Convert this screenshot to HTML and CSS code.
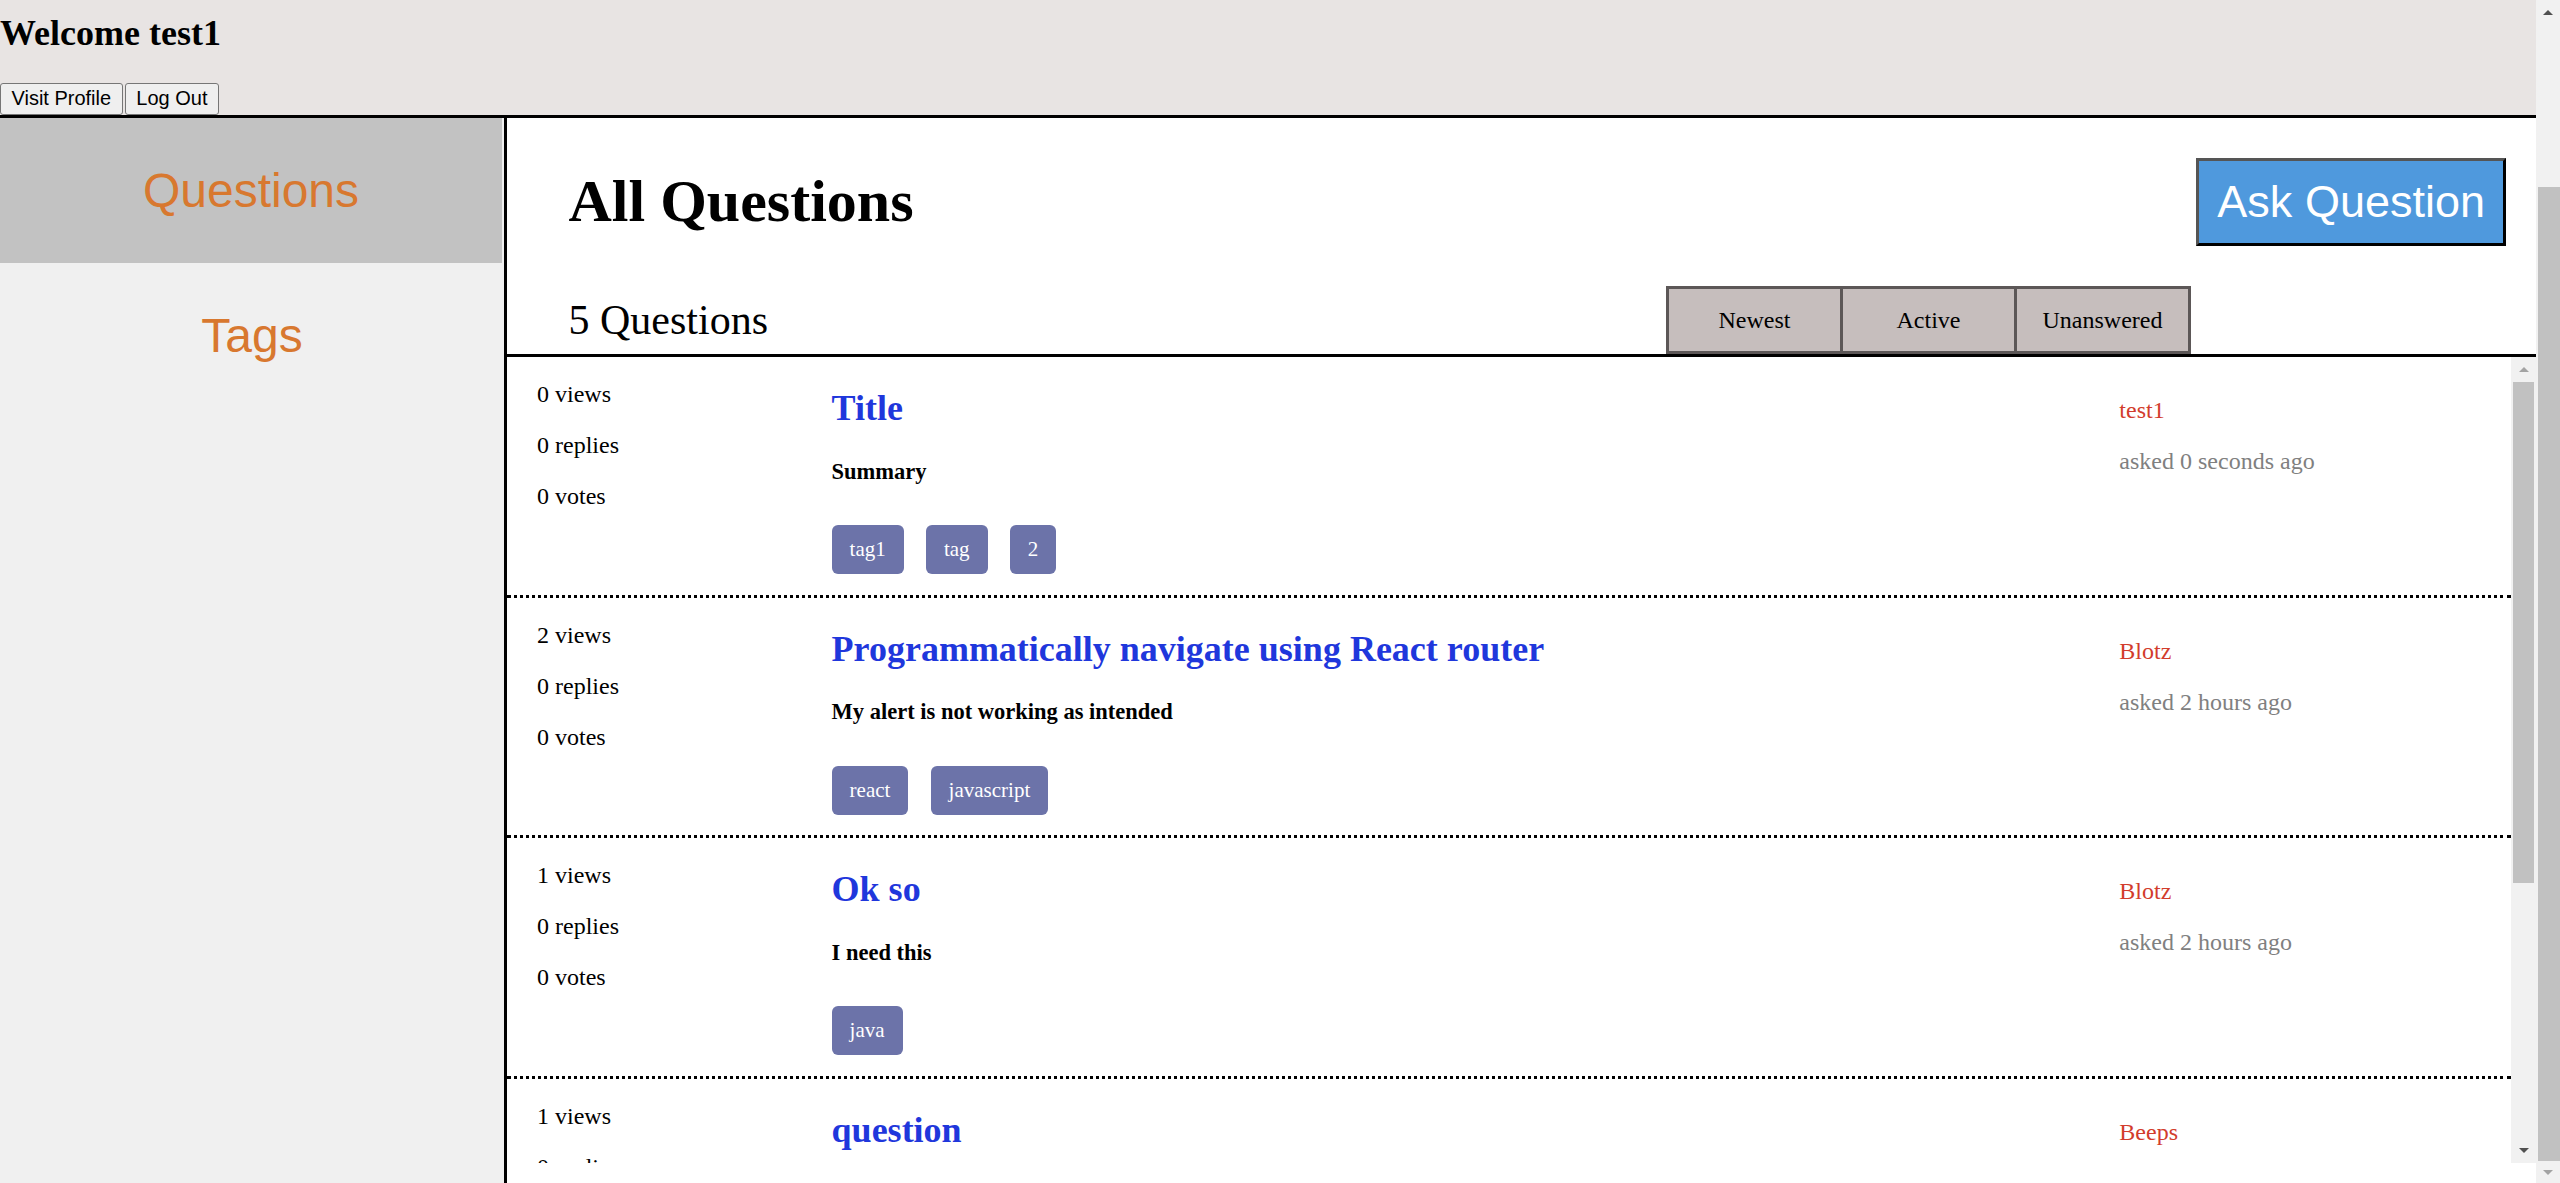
FILE: index.html
```html
<!DOCTYPE html>
<html lang="en">
<head>
<meta charset="utf-8">
<title>Fake Stack Overflow</title>
<link rel="stylesheet" href="styles.css">
</head>
<body>
<div class="page">
  <div class="app">
    <header class="topbar">
      <h2 class="welcome">Welcome test1</h2>
      <div class="actions"><button class="sys-btn" type="button">Visit Profile</button><button class="sys-btn" type="button">Log Out</button></div>
    </header>
    <div class="layout">
      <nav class="sidebar">
        <div class="nav-item active">Questions</div>
        <div class="nav-item">Tags</div>
      </nav>
      <main class="content">
        <div class="content-head">
          <div class="title-row">
            <h1 class="page-title">All Questions</h1>
            <button class="ask-btn" type="button">Ask Question</button>
          </div>
          <div class="count-row">
            <span class="q-count">5 Questions</span>
            <div class="sort-group">
              <button class="sort-btn" type="button">Newest</button>
              <button class="sort-btn" type="button">Active</button>
              <button class="sort-btn" type="button">Unanswered</button>
            </div>
          </div>
        </div>
        <div class="list-wrap">
          <div class="q-list">
            <div class="q-row">
              <div class="q-stats"><p>0 views</p><p>0 replies</p><p>0 votes</p></div>
              <div class="q-main">
                <h3 class="q-title">Title</h3>
                <p class="q-summary">Summary</p>
                <div class="q-tags"><span class="tag">tag1</span><span class="tag">tag</span><span class="tag">2</span></div>
              </div>
              <div class="q-author"><p class="author">test1</p><p class="asked">asked 0 seconds ago</p></div>
            </div>
            <div class="q-row">
              <div class="q-stats"><p>2 views</p><p>0 replies</p><p>0 votes</p></div>
              <div class="q-main">
                <h3 class="q-title">Programmatically navigate using React router</h3>
                <p class="q-summary">My alert is not working as intended</p>
                <div class="q-tags"><span class="tag">react</span><span class="tag">javascript</span></div>
              </div>
              <div class="q-author"><p class="author">Blotz</p><p class="asked">asked 2 hours ago</p></div>
            </div>
            <div class="q-row">
              <div class="q-stats"><p>1 views</p><p>0 replies</p><p>0 votes</p></div>
              <div class="q-main">
                <h3 class="q-title">Ok so</h3>
                <p class="q-summary">I need this</p>
                <div class="q-tags"><span class="tag">java</span></div>
              </div>
              <div class="q-author"><p class="author">Blotz</p><p class="asked">asked 2 hours ago</p></div>
            </div>
            <div class="q-row">
              <div class="q-stats"><p>1 views</p><p>0 replies</p><p>0 votes</p></div>
              <div class="q-main">
                <h3 class="q-title">question</h3>
                <p class="q-summary">help</p>
                <div class="q-tags"><span class="tag">java</span></div>
              </div>
              <div class="q-author"><p class="author">Beeps</p><p class="asked">asked 3 hours ago</p></div>
            </div>
            <div class="q-row">
              <div class="q-stats"><p>0 views</p><p>0 replies</p><p>0 votes</p></div>
              <div class="q-main">
                <h3 class="q-title">android studio save string shared preference</h3>
                <p class="q-summary">Storing a string</p>
                <div class="q-tags"><span class="tag">android</span></div>
              </div>
              <div class="q-author"><p class="author">Beeps</p><p class="asked">asked 3 hours ago</p></div>
            </div>
          </div>
          <div class="inner-scroll">
            <div class="sb-btn"><span class="tri-up light"></span></div>
            <div class="inner-thumb"></div>
            <div class="sb-fill"></div>
            <div class="sb-btn"><span class="tri-down dark"></span></div>
          </div>
        </div>
      </main>
    </div>
  </div>
  <div class="page-scroll">
    <div class="sb-btn"><span class="tri-up dark"></span></div>
    <div class="page-gap"></div>
    <div class="page-thumb"></div>
    <div class="sb-btn short"><span class="tri-down light"></span></div>
  </div>
</div>
</body>
</html>
```

FILE: styles.css
```css
html {
  zoom: 1.5;
}

body {
  margin: 0;
  background: #ffffff;
  font-family: "Liberation Serif", "Times New Roman", serif;
  font-size: 16px;
  color: #000000;
}

.page {
  display: flex;
  height: 788.67px;
  overflow: hidden;
}

.app {
  flex: 1;
  min-width: 0;
  display: flex;
  flex-direction: column;
}

/* ---------- top bar ---------- */
.topbar {
  background: #e8e4e3;
  border-bottom: 2px solid #000000;
}

.welcome {
  margin: 8px 0 19.4px 0;
  font-size: 24px;
  font-weight: bold;
  line-height: normal;
}

.actions {
  display: flex;
  height: 21px;
}

.sys-btn {
  font-family: "Liberation Sans", Arial, sans-serif;
  font-size: 13.333px;
  line-height: normal;
  padding: 1px 7px;
  margin: 0;
  border: 1px solid #767676;
  border-radius: 2px;
  background: #efefef;
  color: #000000;
  height: 21px;
}

.sys-btn + .sys-btn {
  margin-left: 1.5px;
}

/* ---------- layout ---------- */
.layout {
  flex: 1;
  min-height: 0;
  display: flex;
}

.sidebar {
  width: 338px;
  box-sizing: border-box;
  border-right: 2px solid #000000;
  background: #f0f0f0;
  flex: 0 0 auto;
}

.nav-item {
  padding: 30px 0;
  text-align: center;
  font-family: "Liberation Sans", Arial, sans-serif;
  font-size: 32px;
  line-height: normal;
  color: #d8782f;
}

.nav-item.active {
  background: #c2c2c2;
  margin-right: 1.33px;
}

.content {
  flex: 1;
  min-width: 0;
  display: flex;
  flex-direction: column;
  background: #ffffff;
}

/* ---------- content head ---------- */
.title-row {
  display: flex;
  justify-content: space-between;
  align-items: center;
  padding: 0 20px 0 41px;
}

.page-title {
  margin: 33.2px 0;
  font-size: 40px;
  font-weight: bold;
  line-height: normal;
}

.ask-btn {
  font-family: "Liberation Sans", Arial, sans-serif;
  font-size: 30px;
  line-height: normal;
  color: #ffffff;
  background: #4f99dd;
  padding: 10px 12px;
  border: 2px solid;
  border-color: #555555 #000000 #000000 #555555;
  border-radius: 0;
  margin: 0;
}

.count-row {
  display: flex;
  align-items: center;
  height: 45.5px;
  padding-left: 41px;
  border-bottom: 2px solid #000000;
}

.q-count {
  font-size: 28px;
  line-height: normal;
}

.sort-group {
  margin-left: auto;
  margin-right: 230px;
  display: flex;
  align-self: stretch;
}

.sort-btn {
  width: 118px;
  height: 100%;
  margin: 0;
  padding: 0;
  background: #c6bebd;
  border: 2px solid #5c5757;
  border-radius: 0;
  font-family: "Liberation Serif", "Times New Roman", serif;
  font-size: 16px;
  color: #000000;
}

.sort-btn + .sort-btn {
  margin-left: -2px;
}

/* ---------- question list ---------- */
.list-wrap {
  display: flex;
  height: 536.8px;
}

.q-list {
  flex: 1;
  min-width: 0;
  overflow: hidden;
}

.q-row {
  display: flex;
  height: 158.3px;
  border-bottom: 2px dotted #000000;
}

.q-stats {
  flex: 0 0 216.4px;
  box-sizing: border-box;
  padding-left: 20px;
}

.q-stats p,
.q-author p {
  margin: 16px 0;
  line-height: normal;
}

.q-main {
  flex: 0 0 858.5px;
}

.q-title {
  margin: 20px 0 19.5px 0;
  font-size: 24px;
  font-weight: bold;
  line-height: normal;
  color: #1f37dc;
}

.q-summary {
  margin: 0 0 27px 0;
  font-size: 15px;
  font-weight: bold;
  line-height: normal;
}

.q-tags {
  display: flex;
  gap: 14.8px;
}

.tag {
  padding: 8px 12px;
  background: #6c73a9;
  color: #ffffff;
  font-size: 14px;
  line-height: normal;
  border-radius: 4px;
}

.q-author {
  flex: 1;
  padding-top: 10.5px;
}

.author {
  color: #d23c2c;
}

.asked {
  color: #808080;
}

/* ---------- scrollbars ---------- */
.inner-scroll {
  width: 16.67px;
  background: #f1f1f1;
  display: flex;
  flex-direction: column;
}

.sb-btn {
  height: 16.67px;
  display: flex;
  align-items: center;
  justify-content: center;
  flex: 0 0 auto;
}

.inner-thumb {
  height: 334px;
  margin: 0 1.33px;
  background: #c1c1c1;
}

.sb-fill {
  flex: 1;
}

.page-scroll {
  width: 16px;
  background: #f1f1f1;
  display: flex;
  flex-direction: column;
}

.page-scroll .sb-btn {
  height: 16px;
}

.page-scroll .sb-btn.short {
  height: 14.67px;
}

.page-gap {
  height: 108.4px;
}

.page-thumb {
  flex: 1;
  margin-left: 1.33px;
  background: #c1c1c1;
}

.tri-up,
.tri-down {
  width: 0;
  height: 0;
  border-left: 3.5px solid transparent;
  border-right: 3.5px solid transparent;
}

.tri-up.dark {
  border-bottom: 3.5px solid #505050;
}

.tri-up.light {
  border-bottom: 3.5px solid #a3a3a3;
}

.tri-down.dark {
  border-top: 3.5px solid #505050;
}

.tri-down.light {
  border-top: 3.5px solid #a3a3a3;
}
```
